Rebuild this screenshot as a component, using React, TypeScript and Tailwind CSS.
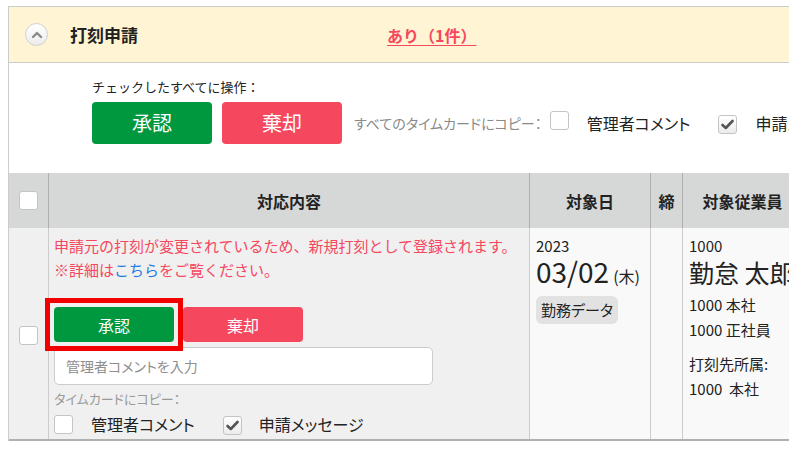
import React from "react";

function CheckBox({ checked = false }: { checked?: boolean }) {
  return (
    <span
      className={
        "inline-flex h-[19px] w-[19px] shrink-0 items-center justify-center rounded-[3px] border border-[#c4c4c4] " +
        (checked ? "bg-gradient-to-b from-white to-[#ececec]" : "bg-white")
      }
    >
      {checked && (
        <svg width="13" height="11" viewBox="0 0 13 11">
          <path d="M1.5 6 L4.8 9 L11.5 2" fill="none" stroke="#555" strokeWidth="2.6" strokeLinecap="round" strokeLinejoin="round" />
        </svg>
      )}
    </span>
  );
}

function BigButton({ label, color }: { label: string; color: "green" | "red" }) {
  return (
    <button
      className={
        "flex h-[42px] w-[120px] items-center justify-center rounded-[4px] text-[20px] text-white " +
        (color === "green" ? "bg-[#00983f]" : "bg-[#f5475d]")
      }
    >
      {label}
    </button>
  );
}

const palt = "[font-feature-settings:'palt']";

export default function App() {
  return (
    <div
      className="relative h-[452px] w-[789px] overflow-hidden bg-white text-[#222]"
      style={{ fontFamily: '"Noto Sans CJK JP", "Noto Sans", sans-serif' }}
    >
      <div className="ml-2 mt-[6px] w-[900px] border-l border-t border-[#cccccc]">
        {/* section header */}
        <div className="flex h-[56px] items-center border-b border-[#cccccc] bg-[#fff4d3]">
          <span className="ml-[16px] flex h-[23px] w-[23px] items-center justify-center rounded-full border border-[#d0d0d0] bg-gradient-to-b from-white to-[#ececec]">
            <svg width="12" height="8" viewBox="0 0 12 8">
              <path d="M2 6 L6 2 L10 6" fill="none" stroke="#8a8a8a" strokeWidth="2.4" strokeLinecap="round" strokeLinejoin="round" />
            </svg>
          </span>
          <span className="ml-[22px] text-[17px] font-bold">打刻申請</span>
          <a className="ml-[249px] text-[16px] font-bold text-[#f5475d] underline underline-offset-[3px]">あり（1件）</a>
        </div>

        {/* bulk actions */}
        <div className="pl-[83px] pt-[14px]">
          <div className="text-[13px] leading-[20px]">チェックしたすべてに操作：</div>
          <div className="mt-[5px] flex items-center">
            <BigButton label="承認" color="green" />
            <div className="ml-[10px]">
              <BigButton label="棄却" color="red" />
            </div>
            <span className={"ml-[12px] text-[14px] text-[#8a8a8a] " + palt}>すべてのタイムカードにコピー：</span>
            <span className="ml-[8px]">
              <CheckBox />
            </span>
            <span className={"ml-[18px] text-[16px] " + palt}>管理者コメント</span>
            <span className="ml-[28px]">
              <CheckBox checked />
            </span>
            <span className={"ml-[18px] text-[16px] " + palt}>申請メッセージ</span>
          </div>
        </div>

        {/* table */}
        <div className="mt-[29px]">
          <div className="flex h-[55px] bg-[#d6d7d7] text-[16px] font-bold">
            <div className="flex w-[39px] items-center justify-center">
              <CheckBox />
            </div>
            <div className="flex w-[481px] items-center justify-center border-l border-[#aeaeae]">対応内容</div>
            <div className="flex w-[121px] items-center justify-center border-l border-[#aeaeae]">対象日</div>
            <div className="flex w-[32px] items-center justify-center border-l border-[#aeaeae]">締</div>
            <div className="flex w-[120px] items-center justify-center border-l border-[#aeaeae]">対象従業員</div>
            <div className="flex-1 border-l border-[#aeaeae]" />
          </div>

          <div className="flex h-[213px] border-b-2 border-[#b0b0b0]">
            <div className="flex w-[39px] items-center justify-center bg-[#f0f0f0] pt-[3px]">
              <CheckBox />
            </div>
            <div className="w-[481px] border-l border-[#cccccc] bg-[#f0f0f0] pl-[5px] pt-[6px]">
              <div className="whitespace-nowrap text-[15px] leading-[24px] text-[#f5475d]">
                申請元の打刻が変更されているため、新規打刻として登録されます。
                <br />
                ※詳細は<span className="text-[#1f7ae0]">こちら</span>をご覧ください。
              </div>
              <div className="mt-[25px] flex gap-[9px]">
                <button className="relative z-10 flex h-[35px] w-[120px] items-center justify-center rounded-[4px] bg-[#00983f] text-[16px] text-white">
                  承認
                  <span className="pointer-events-none absolute -inset-[9px] border-[5px] border-[#f20000]" />
                </button>
                <button className="flex h-[35px] w-[120px] items-center justify-center rounded-[4px] bg-[#f5475d] text-[16px] text-white">
                  棄却
                </button>
              </div>
              <div className={"mt-[5px] flex h-[38px] w-[379px] items-center rounded-[5px] border border-[#cccccc] bg-white pl-[11px] text-[14px] text-[#8f8f8f] " + palt}>
                管理者コメントを入力
              </div>
              <div className={"mt-[5px] text-[13px] leading-[18px] text-[#9a9a9a] " + palt}>タイムカードにコピー：</div>
              <div className="mt-[4px] flex items-center">
                <CheckBox />
                <span className={"ml-[18px] text-[16px] " + palt}>管理者コメント</span>
                <span className="ml-[28px]">
                  <CheckBox checked />
                </span>
                <span className={"ml-[17px] text-[16px] " + palt}>申請メッセージ</span>
              </div>
            </div>
            <div className="w-[121px] border-l border-[#cccccc] bg-[#f9f9f9] pl-[6px] pt-[7px]">
              <div className="text-[15px] leading-[21px]">2023</div>
              <div className="flex items-baseline leading-[30px]">
                <span className="text-[28px]">03/02</span>
                <span className="ml-[4px] text-[16px]">(木)</span>
              </div>
              <span className={"mt-[5px] inline-flex h-[28px] items-center rounded-[6px] bg-[#e2e2e2] px-[5px] text-[15px] " + palt}>
                勤務データ
              </span>
            </div>
            <div className="w-[32px] border-l border-[#cccccc] bg-[#f9f9f9]" />
            <div className="flex-1 border-l border-[#cccccc] bg-[#f9f9f9] pl-[6px] pt-[7px] text-[15px]">
              <div className="leading-[21px]">1000</div>
              <div className="text-[25px] leading-[32px]">勤怠&nbsp;太郎</div>
              <div className="mt-[4px] leading-[25px]">1000 本社</div>
              <div className="leading-[25px]">1000 正社員</div>
              <div className="mt-[9px] leading-[25px]">打刻先所属:</div>
              <div className="leading-[25px]">1000&nbsp;&nbsp;本社</div>
            </div>
          </div>
        </div>
      </div>
    </div>
  );
}
